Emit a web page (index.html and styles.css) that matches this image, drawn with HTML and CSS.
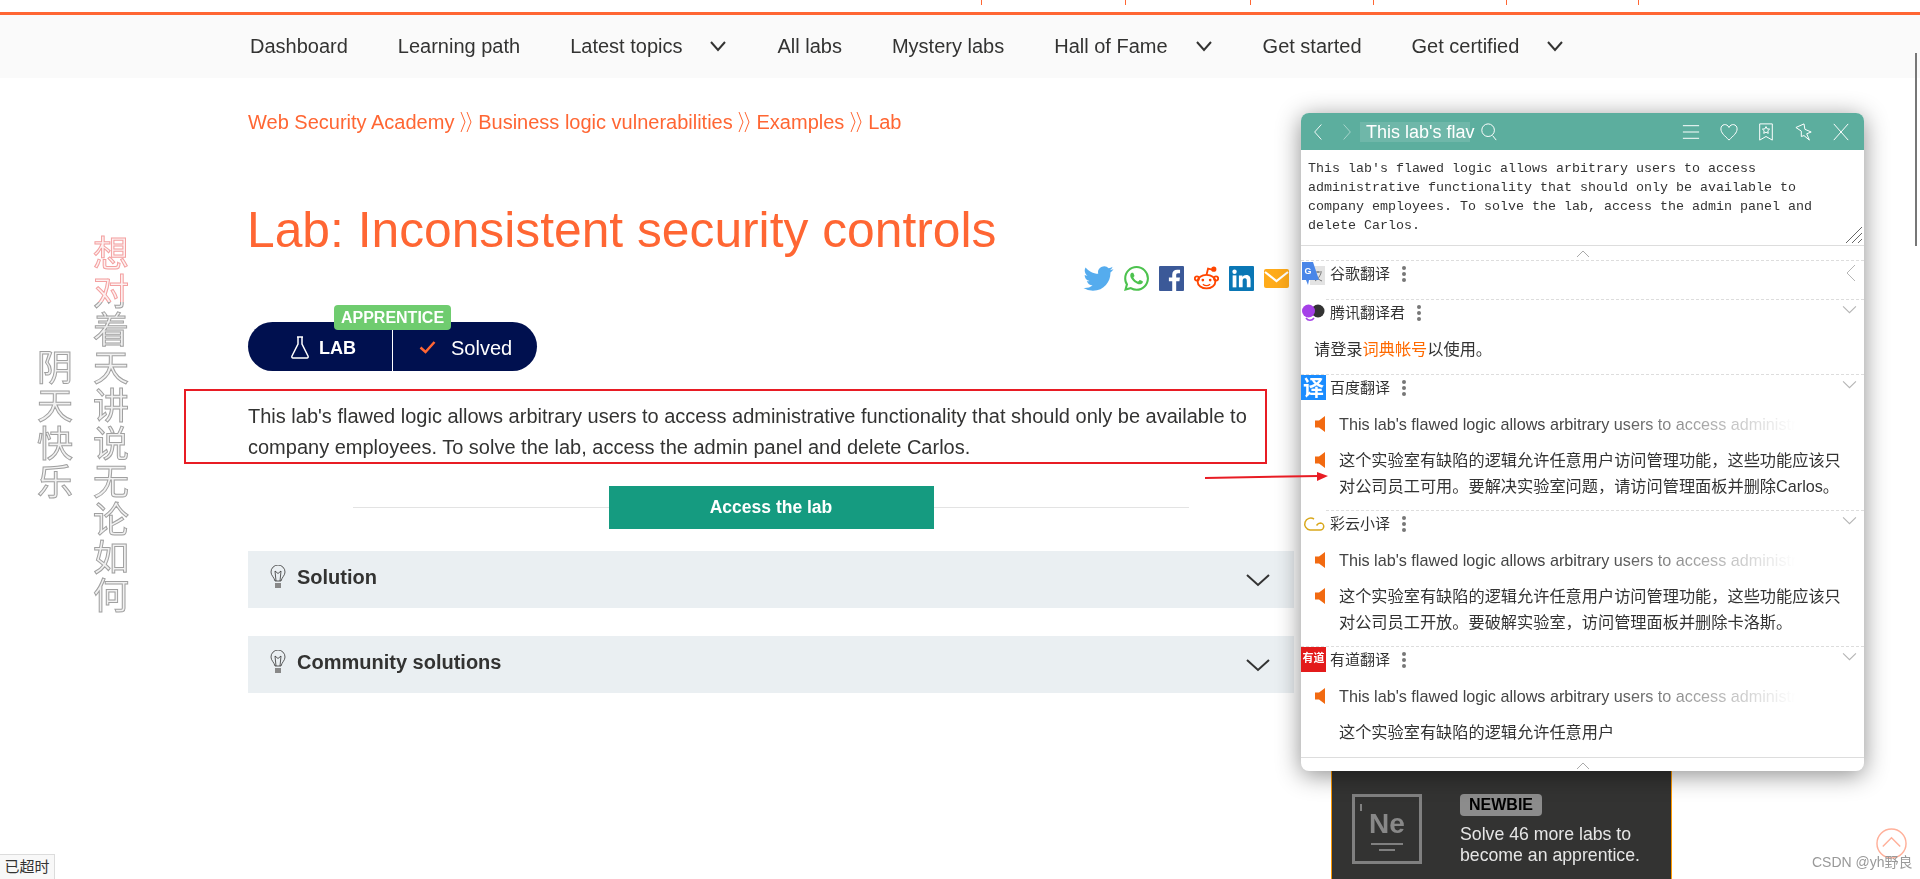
FILE: index.html
```html
<!DOCTYPE html>
<html lang="en" dir="ltr">
    <head>
        <meta charset="utf-8">
        <meta name="viewport" content="width=device-width, initial-scale=1.0">
        <link rel="stylesheet" href="styles.css">
        <title>Lab: Inconsistent security controls</title>
    </head>
    <body>
        <div class="top-tabs">
            <span class="top-tab"></span><span class="top-tab w124"></span><span class="top-tab w122"></span><span class="top-tab w132"></span><span class="top-tab w131"></span><span class="top-tab"></span>
        </div>
        <nav class="main-nav">
            <a>Dashboard</a>
            <a>Learning path</a>
            <a>Latest topics<svg class="nav-arrow" viewBox="0 0 18 12"><path d="M2 2l7 8 7-8"/></svg></a>
            <a>All labs</a>
            <a>Mystery labs</a>
            <a>Hall of Fame<svg class="nav-arrow" viewBox="0 0 18 12"><path d="M2 2l7 8 7-8"/></svg></a>
            <a>Get started</a>
            <a>Get certified<svg class="nav-arrow" viewBox="0 0 18 12"><path d="M2 2l7 8 7-8"/></svg></a>
        </nav>

        <div class="layout">
            <div class="content">
                <div class="breadcrumb">
                    <a>Web Security Academy</a>
                    <svg class="crumb-sep" viewBox="0 0 13 22"><path d="M1 1l4 10-4 10M7 1l4 10-4 10"/></svg>
                    <a>Business logic vulnerabilities</a>
                    <svg class="crumb-sep" viewBox="0 0 13 22"><path d="M1 1l4 10-4 10M7 1l4 10-4 10"/></svg>
                    <a>Examples</a>
                    <svg class="crumb-sep" viewBox="0 0 13 22"><path d="M1 1l4 10-4 10M7 1l4 10-4 10"/></svg>
                    <a>Lab</a>
                </div>
                <h1 class="page-header">Lab: Inconsistent security controls</h1>

                <div class="share">
                    <svg class="share-wide" viewBox="0 0 24 20" fill="#55acee"><path d="M23.953 2.57a10 10 0 01-2.825.775 4.958 4.958 0 002.163-2.723c-.951.555-2.005.959-3.127 1.184a4.92 4.92 0 00-8.384 4.482C7.69 6.095 4.067 4.13 1.64 1.162a4.822 4.822 0 00-.666 2.475c0 1.71.87 3.213 2.188 4.096a4.904 4.904 0 01-2.228-.616v.06a4.923 4.923 0 003.946 4.827 4.996 4.996 0 01-2.212.085 4.936 4.936 0 004.604 3.417 9.867 9.867 0 01-6.102 2.105c-.39 0-.779-.023-1.17-.067a13.995 13.995 0 007.557 2.209c9.053 0 13.998-7.496 13.998-13.985 0-.21 0-.42-.015-.63A9.935 9.935 0 0024 2.59z"/></svg>
                    <svg viewBox="0 0 24 24" fill="#4cc24e"><path d="M17.472 14.382c-.297-.149-1.758-.867-2.03-.967-.273-.099-.471-.148-.67.15-.197.297-.767.966-.94 1.164-.173.199-.347.223-.644.075-.297-.15-1.255-.463-2.39-1.475-.883-.788-1.48-1.761-1.653-2.059-.173-.297-.018-.458.13-.606.134-.133.298-.347.446-.52.149-.174.198-.298.298-.497.099-.198.05-.371-.025-.52-.075-.149-.669-1.612-.916-2.207-.242-.579-.487-.5-.669-.51-.173-.008-.371-.01-.57-.01-.198 0-.52.074-.792.372-.272.297-1.04 1.016-1.04 2.479 0 1.462 1.065 2.875 1.213 3.074.149.198 2.096 3.2 5.077 4.487.709.306 1.262.489 1.694.625.712.227 1.36.195 1.871.118.571-.085 1.758-.719 2.006-1.413.248-.694.248-1.289.173-1.413-.074-.124-.272-.198-.57-.347m-5.421 7.403h-.004a9.87 9.87 0 01-5.031-1.378l-.361-.214-3.741.982.998-3.648-.235-.374a9.86 9.86 0 01-1.51-5.26c.001-5.45 4.436-9.884 9.888-9.884 2.64 0 5.122 1.03 6.988 2.898a9.825 9.825 0 012.893 6.994c-.003 5.45-4.437 9.884-9.885 9.884m8.413-18.297A11.815 11.815 0 0012.05 0C5.495 0 .16 5.335.157 11.892c0 2.096.547 4.142 1.588 5.945L.057 24l6.305-1.654a11.882 11.882 0 005.683 1.448h.005c6.554 0 11.89-5.335 11.893-11.893a11.821 11.821 0 00-3.48-8.413z"/></svg>
                    <svg viewBox="0 0 24 24"><rect width="24" height="24" rx="1" fill="#3b5998"/><path fill="#fff" d="M16.500 24v-9.300h3.100l.5-3.600h-3.600V8.800c0-1 .3-1.800 1.800-1.800h1.900V3.800c-.3 0-1.500-.1-2.800-.1-2.800 0-4.700 1.700-4.700 4.800v2.600H9.500v3.600h3.200V24z"/></svg>
                    <svg viewBox="0 0 24 24" fill="none" stroke="#ff4500" stroke-width="1.800"><ellipse cx="12" cy="15" rx="8.500" ry="6.500"/><circle cx="2.800" cy="12" r="2"/><circle cx="21.200" cy="12" r="2"/><path d="M12 8.500l1.500-6 4 1"/><circle cx="19" cy="3" r="1.600" fill="#ff4500"/><circle cx="8.500" cy="13.500" r="1.300" fill="#ff4500" stroke="none"/><circle cx="15.500" cy="13.500" r="1.300" fill="#ff4500" stroke="none"/><path d="M8.500 17.500c2 1.500 5 1.500 7 0" stroke-width="1.300"/></svg>
                    <svg viewBox="0 0 24 24"><rect width="24" height="24" rx="1" fill="#0a77b5"/><rect x="3.500" y="9" width="3.600" height="11.500" fill="#fff"/><circle cx="5.300" cy="5.500" r="2.100" fill="#fff"/><path fill="#fff" d="M9.500 9h3.400v1.600c.6-1 1.800-1.900 3.600-1.900 3.500 0 4.200 2.300 4.200 5.300v6.500h-3.600v-5.800c0-1.400 0-3-1.900-3s-2.100 1.400-2.100 2.900v5.900H9.500z"/></svg>
                    <svg class="share-mail" viewBox="0 0 25 19"><rect width="25" height="19" rx="2" fill="#ffab1a"/><path d="M1 3l11.500 9L24 3" fill="none" stroke="#fff" stroke-width="2.200"/></svg>
                </div>

                <div class="lab-status">
                    <span class="level-tag">APPRENTICE</span>
                    <div class="status-lab">
                        <svg class="flask" viewBox="0 0 20 24"><path d="M7 2h6M8 2v7L2 21c-.5 1 0 2 1 2h14c1 0 1.500-1 1-2L12 9V2"/></svg>
                        <b>LAB</b>
                    </div>
                    <div class="status-solved">
                        <svg class="tick" viewBox="0 0 17 14"><path d="M1.500 7.500l5 4.500 9-10"/></svg>
                        <span>Solved</span>
                    </div>
                </div>

                <div class="intro">
                    <p>This lab's flawed logic allows arbitrary users to access administrative functionality that should only be available to company employees. To solve the lab, access the admin panel and delete Carlos.</p>
                </div>

                <div class="access">
                    <span class="access-line"></span>
                    <a class="access-btn">Access the lab</a>
                    <span class="access-line"></span>
                </div>

                <div class="section-bar">
                    <svg class="bulb" viewBox="0 0 16 24"><path d="M5 16C4 12 1 10.500 1 7a7 7 0 0114 0c0 3.500-3 5-4 9zM6 16L5 6l3 2.500L11 6l-1 10"/><rect x="5" y="18" width="6" height="5" fill="#888" stroke="none"/></svg>
                    <span class="section-title">Solution</span>
                    <svg class="bar-arrow" viewBox="0 0 24 14"><path d="M1 2l11 10L23 2"/></svg>
                </div>
                <div class="section-bar">
                    <svg class="bulb" viewBox="0 0 16 24"><path d="M5 16C4 12 1 10.500 1 7a7 7 0 0114 0c0 3.500-3 5-4 9zM6 16L5 6l3 2.500L11 6l-1 10"/><rect x="5" y="18" width="6" height="5" fill="#888" stroke="none"/></svg>
                    <span class="section-title">Community solutions</span>
                    <svg class="bar-arrow" viewBox="0 0 24 14"><path d="M1 2l11 10L23 2"/></svg>
                </div>
            </div>

            <aside class="level-card">
                <div class="level-head">Your level</div>
                <div class="level-body">
                    <div class="element">
                        <span class="element-tick"></span>
                        <span class="element-name">Ne</span>
                        <span class="element-bar"></span>
                        <span class="element-bar short"></span>
                    </div>
                    <div>
                        <span class="newbie">NEWBIE</span>
                        <p class="level-text">Solve 46 more labs to become an apprentice.</p>
                    </div>
                </div>
            </aside>
        </div>

        <!-- stuff floating over the page -->
        <div class="poem poem-short">阴天快乐</div>
        <div class="poem poem-long">想对着天讲说无论如何</div>
        <div class="poem-tint"></div>

        <div class="timeout">已超时</div>
        <div class="page-scroll"></div>
        <svg class="to-top" viewBox="0 0 32 32"><circle cx="16" cy="16" r="15"/><path d="M7 19l9-9 9 9"/></svg>
        <div class="watermark">CSDN @yh野良</div>

        <div class="dict">
            <div class="dict-bar">
                <svg class="bar-icon small" viewBox="0 0 12 20"><path d="M10 1L2 10l8 9"/></svg>
                <svg class="bar-icon small faded" viewBox="0 0 12 20"><path d="M2 1l8 9-8 9"/></svg>
                <span class="dict-query">This lab's flav</span>
                <svg class="bar-icon" viewBox="0 0 20 20"><circle cx="9" cy="8" r="7"/><path d="M14 14l4 5"/></svg>
                <span class="bar-spacer"></span>
                <svg class="bar-icon" viewBox="0 0 20 20"><path d="M1 3h18M1 10h18M1 17h18"/></svg>
                <svg class="bar-icon" viewBox="0 0 20 20"><path d="M10 19C5 14 1 11 1 6.500 1 1 8 0 10 5c2-5 9-4 9 1.500C19 11 15 14 10 19z"/></svg>
                <svg class="bar-icon" viewBox="0 0 20 20"><path d="M3 1h14v18l-7-4-7 4zM10 4l1.200 2.500 2.800.3-2 1.900.5 2.800-2.500-1.300-2.500 1.300.5-2.800-2-1.900 2.800-.3z"/></svg>
                <svg class="bar-icon" viewBox="0 0 20 20"><path d="M10 1l1 6 7 3-5 2 3 7-6-5-3 1V9L1 5z"/></svg>
                <svg class="bar-icon" viewBox="0 0 20 20"><path d="M2 1l16 18M18 1L2 19"/></svg>
            </div>

            <div class="dict-text">This lab's flawed logic allows arbitrary users to access administrative functionality that should only be available to company employees. To solve the lab, access the admin panel and delete Carlos.
                <svg class="resize" viewBox="0 0 18 18"><path d="M1 17L17 1M7 17L17 7M13 17l4-4"/></svg>
            </div>
            <div class="fold"><svg viewBox="0 0 14 8"><path d="M1 7l6-6 6 6"/></svg></div>

            <section class="engine engine-google">
                <div class="engine-head">
                    <svg class="engine-icon" viewBox="0 0 25 25"><rect x="9" y="5" width="15" height="19" fill="#e3e3e3"/><path d="M13 11h8M17 10v2M14 20c3-2 5-5 6-8M15 14c1 3 3 5 6 6" stroke="#777" fill="none"/><path d="M1 1h11l6 18H8l-1 5-2-5H1z" fill="#4a86e8"/><text x="3.500" y="13" class="g-letter">G</text></svg>
                    <span class="engine-name">谷歌翻译</span>
                    <span class="dots"></span>
                    <svg class="engine-arrow side" viewBox="0 0 10 18"><path d="M9 1L1 9l8 8"/></svg>
                </div>
            </section>

            <section class="engine engine-tencent">
                <div class="engine-head">
                    <svg class="engine-icon cover" viewBox="0 0 25 25"><circle cx="17" cy="12" r="6.500" fill="#333"/><circle cx="7.500" cy="12" r="6.500" fill="#a540e8"/><path d="M5 19c2 3 6 3 8 0" stroke="#a540e8" fill="none" stroke-width="1.500"/></svg>
                    <span class="engine-name">腾讯翻译君</span>
                    <span class="dots"></span>
                    <svg class="engine-arrow" viewBox="0 0 14 8"><path d="M1 1l6 6 6-6"/></svg>
                </div>
                <p class="login-msg">请登录<a>词典帐号</a>以使用。</p>
            </section>

            <section class="engine">
                <div class="engine-head">
                    <span class="engine-icon baidu">译</span>
                    <span class="engine-name">百度翻译</span>
                    <span class="dots"></span>
                    <svg class="engine-arrow" viewBox="0 0 14 8"><path d="M1 1l6 6 6-6"/></svg>
                </div>
                <div class="line"><svg class="speaker" viewBox="0 0 10 16"><path d="M10 0v16L4 11.500H0v-7h4z"/></svg><div class="src">This lab's flawed logic allows arbitrary users to access administr</div></div>
                <div class="line"><svg class="speaker" viewBox="0 0 10 16"><path d="M10 0v16L4 11.500H0v-7h4z"/></svg><div class="trans">这个实验室有缺陷的逻辑允许任意用户访问管理功能，这些功能应该只对公司员工可用。要解决实验室问题，请访问管理面板并删除Carlos。</div></div>
            </section>

            <section class="engine">
                <div class="engine-head">
                    <svg class="engine-icon cover" viewBox="0 0 25 25"><path d="M13 9a6 6 0 10-4 11h10a3.500 3.500 0 00.500-7c-2 0-3 1-4 2.500" fill="none" stroke="#d9a81c" stroke-width="1.500"/></svg>
                    <span class="engine-name">彩云小译</span>
                    <span class="dots"></span>
                    <svg class="engine-arrow" viewBox="0 0 14 8"><path d="M1 1l6 6 6-6"/></svg>
                </div>
                <div class="line"><svg class="speaker" viewBox="0 0 10 16"><path d="M10 0v16L4 11.500H0v-7h4z"/></svg><div class="src">This lab's flawed logic allows arbitrary users to access administr</div></div>
                <div class="line"><svg class="speaker" viewBox="0 0 10 16"><path d="M10 0v16L4 11.500H0v-7h4z"/></svg><div class="trans">这个实验室有缺陷的逻辑允许任意用户访问管理功能，这些功能应该只对公司员工开放。要破解实验室，访问管理面板并删除卡洛斯。</div></div>
            </section>

            <section class="engine engine-last">
                <div class="engine-head">
                    <span class="engine-icon youdao">有道</span>
                    <span class="engine-name">有道翻译</span>
                    <span class="dots"></span>
                    <svg class="engine-arrow" viewBox="0 0 14 8"><path d="M1 1l6 6 6-6"/></svg>
                </div>
                <div class="line"><svg class="speaker" viewBox="0 0 10 16"><path d="M10 0v16L4 11.500H0v-7h4z"/></svg><div class="src">This lab's flawed logic allows arbitrary users to access administr</div></div>
                <div class="line"><span class="speaker"></span><div class="trans">这个实验室有缺陷的逻辑允许任意用户</div></div>
            </section>

            <div class="fold fold-bottom"><svg viewBox="0 0 14 8"><path d="M1 7l6-6 6 6"/></svg></div>
        </div>

        <svg class="red-arrow" viewBox="0 0 124 12"><path d="M0 7l114-2" stroke="#e81c24" stroke-width="2"/><path d="M112 1l11 4-11 5z" fill="#e81c24"/></svg>
    </body>
</html>
```

FILE: styles.css
```css
html, body {
  height: 879px;
  overflow: hidden;
}
body {
  margin: 0;
  position: relative;
  background-color: white;
  color: #333332;
  font-family: "Liberation Sans", Arial, "Noto Sans CJK SC", sans-serif;
  font-size: 20px;
}
svg {
  display: block;
}

/* top of the page */
.top-tabs {
  display: flex;
  height: 12px;
  padding-left: 981px;
}
.top-tab {
  width: 143px;
  height: 5px;
  border-left: 1px solid #ff6633;
}
.top-tab.w124 { width: 124px; }
.top-tab.w122 { width: 122px; }
.top-tab.w132 { width: 132px; }
.top-tab.w131 { width: 131px; }
.main-nav {
  display: flex;
  gap: 50px;
  height: 63px;
  padding-left: 250px;
  align-items: center;
  background-color: #fafafa;
  border-top: 3px solid #ff6633;
  color: #333332;
}
.main-nav a {
  display: flex;
  align-items: center;
  padding-bottom: 1px;
}
.nav-arrow {
  width: 18px;
  height: 12px;
  margin-left: 27px;
  fill: none;
  stroke: #333332;
  stroke-width: 2;
}

/* main column */
.layout {
  display: flex;
  padding-left: 248px;
}
.content {
  width: 1046px;
  flex: none;
}
.breadcrumb {
  display: flex;
  align-items: center;
  gap: 5.4px;
  height: 30px;
  margin-top: 29px;
  color: #ff6633;
}
.crumb-sep {
  width: 13px;
  height: 22px;
  fill: none;
  stroke: #ff6633;
}
.page-header {
  margin: 63px 0 0 -1px;
  height: 60px;
  color: #ff6633;
  font-size: 49.75px;
  line-height: 60px;
  font-weight: 400;
}
.share {
  display: flex;
  justify-content: flex-end;
  gap: 10px;
  height: 25px;
  margin-top: 6px;
  margin-right: 5px;
}
.share svg {
  width: 25px;
  height: 25px;
}
.share .share-wide {
  width: 31px;
}
.share .share-mail {
  height: 19px;
  margin-top: 3px;
}
.lab-status {
  position: relative;
  display: flex;
  width: 289px;
  height: 49px;
  margin-top: 31px;
  background-color: #00104f;
  border-radius: 25px;
  color: white;
}
.level-tag {
  position: absolute;
  left: 86px;
  top: -17px;
  width: 117px;
  height: 25px;
  background-color: #6fcc6f;
  border-radius: 4px;
  font-size: 16px;
  font-weight: 700;
  line-height: 25px;
  text-align: center;
}
.status-lab {
  display: flex;
  align-items: center;
  width: 145px;
  padding-left: 42px;
  box-sizing: border-box;
  border-right: 1px solid white;
  font-size: 18px;
}
.status-lab b {
  padding-top: 3px;
}
.flask {
  width: 20px;
  height: 24px;
  margin-right: 9px;
  fill: none;
  stroke: white;
  stroke-width: 1.5;
}
.status-solved {
  display: flex;
  align-items: center;
  padding-left: 26px;
}
.status-solved span {
  padding-top: 3px;
}
.tick {
  width: 17px;
  height: 14px;
  margin-right: 15px;
  fill: none;
  stroke: #ff6633;
  stroke-width: 2.5;
}
.intro {
  height: 71px;
  margin-top: 18px;
  margin-left: -64px;
  margin-right: 27px;
  padding-left: 62px;
  border: 2px solid #e81c24;
}
.intro p {
  margin: 0;
  padding-top: 10px;
  width: 1015px;
  font-size: 20px;
  line-height: 31px;
}
.access {
  display: flex;
  height: 43px;
  margin-top: 22px;
  margin-left: 105px;
  width: 836px;
}
.access-line {
  flex: 1;
  height: 1px;
  margin-top: 21px;
  background-color: #e3e3e3;
}
.access-btn {
  width: 325px;
  background-color: #159b80;
  color: white;
  font-size: 17.5px;
  font-weight: 700;
  line-height: 43px;
  text-align: center;
}
.section-bar {
  display: flex;
  align-items: center;
  height: 57px;
  margin-top: 28px;
  padding: 0 24px 0 22px;
  background-color: #eaeff2;
}
.access + .section-bar {
  margin-top: 22px;
}
.bulb {
  width: 16px;
  height: 24px;
  margin: 0 11px 6px 0;
  fill: none;
  stroke: #333;
  stroke-width: 0.8;
}
.section-title {
  flex: 1;
  font-weight: 700;
  padding-bottom: 5px;
}
.bar-arrow {
  width: 24px;
  height: 14px;
  fill: none;
  stroke: #333;
  stroke-width: 2;
}

/* dark box low on the right, mostly under the popup */
.level-card {
  width: 341px;
  height: 160px;
  margin-top: 661px;
  margin-left: 37px;
  box-sizing: border-box;
  background-color: #333332;
  border-left: 1px solid #ff9900;
  border-right: 1px solid #ff9900;
  color: #e6e6e6;
}
.level-head {
  height: 55px;
  padding: 14px 0 0 20px;
  box-sizing: border-box;
}
.level-body {
  display: flex;
  gap: 38px;
  padding-left: 20px;
}
.element {
  display: flex;
  flex-direction: column;
  align-items: center;
  position: relative;
  width: 70px;
  height: 70px;
  box-sizing: border-box;
  border: 3px solid #808080;
  color: #888;
}
.element-tick {
  position: absolute;
  left: 5px;
  top: 7px;
  width: 2px;
  height: 7px;
  background-color: #808080;
}
.element-name {
  margin-top: 11px;
  height: 32px;
  font-size: 28px;
  line-height: 32px;
  font-weight: 700;
}
.element-bar {
  width: 32px;
  height: 2px;
  margin-top: 3px;
  background-color: #808080;
}
.element-bar.short {
  width: 16px;
  margin-top: 4px;
}
.newbie {
  display: block;
  width: 82px;
  height: 22px;
  background-color: #8c8c8c;
  border-radius: 4px;
  color: black;
  font-size: 16px;
  font-weight: 700;
  line-height: 22px;
  text-align: center;
}
.level-text {
  margin: 8px 0 0 0;
  width: 200px;
  font-size: 17.7px;
  line-height: 21px;
}

/* things on top of the page */
.poem {
  position: absolute;
  writing-mode: vertical-rl;
  font-family: "Noto Sans CJK SC", sans-serif;
  font-size: 36px;
  line-height: 38px;
  letter-spacing: 2px;
  color: #f1f1f1;
  -webkit-text-stroke: 1px #a0a0a0;
}
.poem-short {
  left: 36px;
  top: 349px;
}
.poem-long {
  left: 92px;
  top: 235px;
}
.poem-tint {
  position: absolute;
  left: 90px;
  top: 235px;
  width: 42px;
  height: 67px;
  background-color: #e00000;
  mix-blend-mode: screen;
}
.red-arrow {
  position: absolute;
  left: 1205px;
  top: 471px;
  width: 124px;
  height: 12px;
}
.timeout {
  position: absolute;
  left: 0;
  bottom: 0;
  width: 55px;
  height: 25px;
  box-sizing: border-box;
  background-color: #f8f8f8;
  border: 1px solid #dcdcdc;
  border-left: none;
  border-bottom: none;
  font-size: 15px;
  line-height: 23px;
  text-align: center;
}
.page-scroll {
  position: absolute;
  left: 1915px;
  top: 53px;
  width: 2px;
  height: 193px;
  background-color: #777;
}
.to-top {
  position: absolute;
  left: 1876px;
  top: 828px;
  width: 31px;
  height: 31px;
  fill: none;
  stroke: #ffb09a;
  stroke-width: 1.5;
}
.watermark {
  position: absolute;
  left: 1812px;
  top: 853px;
  color: #999;
  font-size: 14px;
  line-height: 18px;
}

/* translate popup */
.dict {
  position: absolute;
  left: 1301px;
  top: 113px;
  width: 563px;
  height: 658px;
  background-color: white;
  border-radius: 8px;
  box-shadow: 0 4px 24px rgba(0, 0, 0, 0.45);
  overflow: hidden;
  font-size: 16.2px;
  color: #333;
}
.dict-bar {
  display: flex;
  align-items: center;
  height: 37px;
  padding: 0 14px 0 12px;
  background-color: #5cae9e;
  color: white;
}
.bar-icon {
  width: 18px;
  height: 18px;
  margin-left: 19.5px;
  flex: none;
  fill: none;
  stroke: white;
  stroke-width: 1.1;
}
.bar-icon.small {
  width: 10px;
  margin-left: 0;
  margin-right: 19px;
}
.bar-icon.faded {
  opacity: 0.5;
  margin-right: 8px;
}
.dict-query {
  width: 104px;
  height: 20px;
  padding-left: 6px;
  background-color: rgba(255, 255, 255, 0.12);
  font-size: 18px;
  line-height: 20px;
  white-space: nowrap;
}
.dict-query + .bar-icon {
  margin-left: 10px;
}
.bar-spacer {
  flex: 1;
}
.dict-text {
  position: relative;
  height: 96px;
  padding: 9px 40px 0 7px;
  box-sizing: border-box;
  border-bottom: 1px solid #ddd;
  font-family: "Liberation Mono", "Noto Sans CJK SC", monospace;
  font-size: 13.33px;
  line-height: 19px;
  color: #333;
}
.resize {
  position: absolute;
  right: 1px;
  bottom: 1px;
  width: 18px;
  height: 18px;
  fill: none;
  stroke: #666;
}
.fold {
  display: flex;
  justify-content: center;
  height: 14px;
}
.fold svg {
  width: 14px;
  height: 8px;
  margin-top: 4px;
  fill: none;
  stroke: #aaa;
}
.fold-bottom {
  border-top: 1px solid #ddd;
}
.engine {
  border-top: 1px dashed #ddd;
  padding-bottom: 11px;
}
.engine-tencent {
  padding-bottom: 12px;
}
.engine-google {
  height: 38px;
  padding-bottom: 0;
}
.engine-last {
  padding-bottom: 0;
  height: 110px;
}
.engine-head {
  display: flex;
  align-items: flex-start;
  height: 25px;
  position: relative;
}
.engine-icon {
  width: 25px;
  height: 25px;
  flex: none;
}
.cover {
  margin-top: -1px;
  background-color: white;
}
.g-letter {
  font-size: 9px;
  font-weight: 700;
  fill: white;
}
.baidu {
  background-color: #1a8cff;
  color: white;
  font-size: 21px;
  font-weight: 700;
  line-height: 25px;
  text-align: center;
}
.youdao {
  background-color: #e31b1b;
  color: white;
  font-family: "Liberation Serif", "Noto Sans CJK SC", serif;
  font-size: 11px;
  font-weight: 700;
  line-height: 23px;
  text-align: center;
}
.engine-name {
  margin-left: 4px;
  font-size: 15px;
  line-height: 26px;
}
.dots {
  position: relative;
  width: 4px;
  height: 4px;
  margin: 5px 0 0 12px;
  border-radius: 50%;
  background-color: #777;
  box-shadow: 0 6px 0 #777, 0 12px 0 #777;
}
.engine-arrow {
  position: absolute;
  right: 7px;
  top: 5px;
  width: 15px;
  height: 9px;
  fill: none;
  stroke: #b5b5b5;
}
.engine-arrow.side {
  right: 8px;
  top: 3px;
  width: 10px;
  height: 18px;
}
.login-msg {
  margin: 11px 0 0 0;
  padding-left: 13px;
  line-height: 26px;
}
.login-msg a {
  color: #ff6a00;
}
.line {
  display: flex;
  margin-top: 10px;
  padding-left: 14px;
}
.engine-head + .line {
  margin-top: 11px;
}
.speaker {
  width: 10px;
  height: 16px;
  margin: 5px 14px 0 0;
  flex: none;
  fill: #f26a11;
}
.src {
  width: 470px;
  font-size: 16.2px;
  line-height: 26px;
  white-space: nowrap;
  color: #444;
  -webkit-mask-image: linear-gradient(to right, black 55%, transparent 97%);
  mask-image: linear-gradient(to right, black 55%, transparent 97%);
}
.trans {
  width: 512px;
  font-size: 16.2px;
  line-height: 26px;
}
```
